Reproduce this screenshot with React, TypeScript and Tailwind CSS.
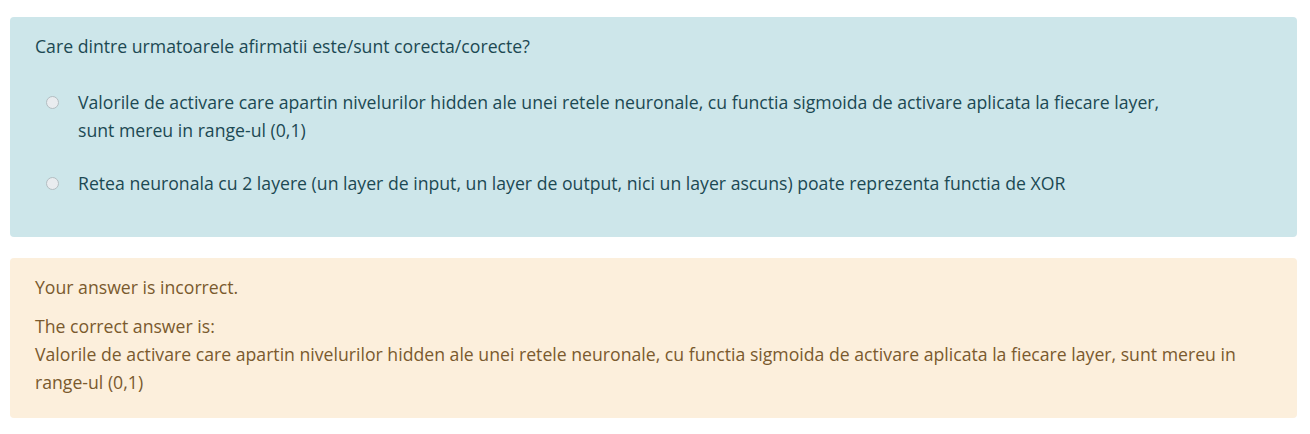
import React from "react";

export default function App() {
  return (
    <div className="w-[1310px] h-[434px] bg-white pt-[17px] pl-[10px] pr-[13px]" style={{ fontFamily: '"Segoe UI", "Open Sans", sans-serif' }}>
      <div className="bg-[#cde6ea] text-[#1c4953] rounded-[4px] px-[25px] pt-[15px] pb-[40px] text-[17.66px] leading-[28px]">
        <div>Care dintre urmatoarele afirmatii este/sunt corecta/corecte?</div>
        <div className="mt-[28px] flex flex-col gap-[25px]">
          <div className="flex items-start">
            <span className="mt-[8px] ml-[11px] w-[13px] h-[13px] rounded-full bg-[#e9ecef] border border-[#b3bdc1] shrink-0" />
            <span className="ml-[19px] whitespace-nowrap">
              Valorile de activare care apartin nivelurilor hidden ale unei retele neuronale, cu functia sigmoida de activare aplicata la fiecare layer,
              <br />
              sunt mereu in range-ul (0,1)
            </span>
          </div>
          <div className="flex items-start">
            <span className="mt-[8px] ml-[11px] w-[13px] h-[13px] rounded-full bg-[#e9ecef] border border-[#b3bdc1] shrink-0" />
            <span className="ml-[19px] whitespace-nowrap">
              Retea neuronala cu 2 layere (un layer de input, un layer de output, nici un layer ascuns) poate reprezenta functia de XOR
            </span>
          </div>
        </div>
      </div>
      <div className="mt-[21px] bg-[#fcefdc] text-[#7a5a2e] rounded-[4px] px-[25px] pt-[15px] pb-[22px] text-[17.66px] leading-[28px]">
        <div>Your answer is incorrect.</div>
        <div className="mt-[11px]">
          The correct answer is:
          <br />
          <span className="whitespace-nowrap">Valorile de activare care apartin nivelurilor hidden ale unei retele neuronale, cu functia sigmoida de activare aplicata la fiecare layer, sunt mereu in</span>
          <br />
          range-ul (0,1)
        </div>
      </div>
    </div>
  );
}
